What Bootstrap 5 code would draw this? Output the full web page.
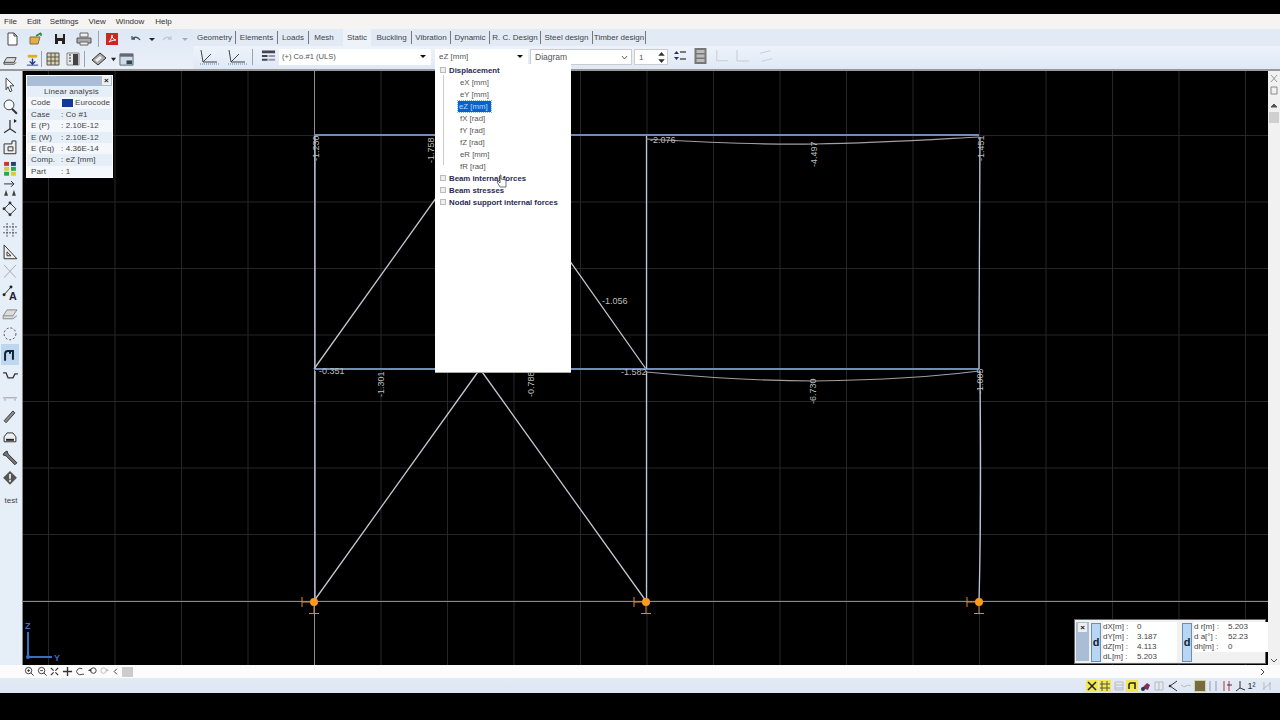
<!DOCTYPE html>
<html lang="en"><head><meta charset="utf-8"><title>Linear analysis</title>
<link href="https://cdn.jsdelivr.net/npm/bootstrap@5.3.0/dist/css/bootstrap.min.css" rel="stylesheet">
<style>
body{background:#000;font-family:"Liberation Sans",Arial,sans-serif;font-size:8px;color:#444;overflow:hidden;width:1280px;height:720px}
.topgap{height:14px}
.menubar{height:15px;background:#f6f4f2;padding-left:4px;font-size:8px;line-height:15px;color:#333}
.menubar span:nth-child(2){margin-left:10px}
.menubar span:nth-child(3){margin-left:9px}
.menubar span:nth-child(4){margin-left:10px}
.menubar span:nth-child(5){margin-left:10px}
.menubar span:nth-child(6){margin-left:11px}
.tb{height:42px;background:#e9eff7}
.tb-left{width:193px;background:linear-gradient(#dde8f5,#eaf0f8);border-bottom:2px solid #999}
.tb-row{height:20px}
.tb-right{flex:1;background:#f1f4f8}
.tabs{height:17px;background:#e2eaf5;font-size:8px;padding-left:1px}
.tabs span{height:13px;line-height:13px;border-right:1px solid #777;text-align:center;flex:none;color:#444}
.tabs span.on{background:#eef3fa;border:0;height:17px;line-height:17px;margin-right:1px}
.tabs span.plain{border:0;margin-right:4px}
.tb2{height:25px;background:linear-gradient(#eef3fa,#dfe9f6);border-bottom:2px solid #999;padding:3px 0 0 5px}
.tb2>svg{margin-top:-1px}
.combo{background:#fff;height:16px;line-height:15px;font-size:8px;padding-left:4px;position:relative;color:#555;flex:none}
.caret-d{position:absolute;right:5px;top:6px;border:3px solid transparent;border-top:3px solid #111;border-bottom:0}
.ic{flex:none;display:block}
.main{height:594px}
.leftbar{width:23px;background:#e6eef8;border-right:1px solid #888;padding-top:4px}
.leftbar svg{display:block;flex:none;margin-left:1px;height:20.700px}
.canvas{width:1245px;position:relative;background:#000}
.canvas>svg{display:block}
.vs{width:12px;background:#f1f1f1;position:relative}
.vs svg{position:absolute;left:1px;display:block}
.vs i{position:absolute;left:1px;top:41px;width:10px;height:11px;background:#cfcfcf;display:block}
.info{position:absolute;left:3px;top:4px;width:87px;height:103px;background:#f4f7fb;border:1px solid #fff;font-size:8px;color:#444;letter-spacing:.1px}
.info .ttl{height:10px;background:#a9bdd6;position:relative}
.info .x{position:absolute;right:1px;top:0;width:9px;height:9px;background:#eee;color:#111;font-size:8px;line-height:9px;text-align:center;font-weight:700}
.info .r{height:11.400px;line-height:11.400px;padding-left:4px;display:flex;white-space:nowrap}
.info .r.alt{background:#e6eef8}
.info .c1{width:30px}
.info .cc{text-align:center;display:block;width:100%}
.flag{width:11px;height:8px;background:#123a9c;margin:2px 2px 0 0;flex:none}
.tree{position:absolute;left:412px;top:-7px;width:136px;height:309px;background:#fff;font-size:7.800px;color:#555;border-bottom:1px solid #aaa}
.tree .h{position:absolute;left:14px;font-weight:700;color:#2a2a55;white-space:nowrap}
.tree .l{position:absolute;left:24px;white-space:nowrap;padding:0 1px}
.tree .sel{background:#0a62c8;color:#bcd9ff;left:23px;width:33px;height:11px;line-height:11px;outline:1px dotted #7fb4ee}
.tree .pm{position:absolute;left:5px;width:6px;height:6px;border:1px solid #bbb;background:#eee}
.tree .tl{position:absolute;background:#ccc}
.coord{position:absolute;left:1051px;top:548px;width:192px;height:45px;background:#f1f1f1;border:1px solid #666;font-size:8px;color:#444;display:flex;padding:2px 1px}
.coord .cl{width:13px;flex:none;background:#a9bdd6;position:relative}
.coord .x{position:absolute;left:2px;top:1px;width:9px;height:9px;background:#eee;color:#111;text-align:center;line-height:9px;font-weight:700}
.dbtn{width:10px;background:#b7d6f3;border:1px solid #6c8fb2;margin:1px 2px 0 2px;font-size:11px;font-weight:700;color:#123;display:flex;align-items:center;justify-content:center;flex:none;height:39px}
.cc-col{width:74px;flex:none;margin-right:3px}
.cc-col div{height:10px;line-height:10px;background:#fff;white-space:nowrap}
.cc-col b{font-weight:400;display:inline-block;width:34px}
.strip{height:13px;background:#fcfcfc;padding-left:24px;gap:1.500px;position:relative}
.status{height:15px;background:linear-gradient(#e4ebf5,#dce6f3);gap:1.500px;padding-right:7px}
.bot{height:27px}
svg text{font-family:"Liberation Sans",Arial,sans-serif}
.sep{display:block;width:1px;height:16px;background:#9aa5b2;flex:none}
</style></head>
<body>
<div class="topgap"></div>
<div class="menubar d-flex"><span>File</span><span>Edit</span><span>Settings</span><span>View</span><span>Window</span><span>Help</span></div>
<div class="tb d-flex">
 <div class="tb-left">
  <div class="tb-row d-flex align-items-center">
   <svg class="ic" style="margin-left:4px" width="16" height="16" viewBox="0 0 16 16"><path d="M4 2h6l3 3v9H4z" fill="#fff" stroke="#444"/><path d="M10 2v3h3" fill="none" stroke="#444"/></svg>
   <svg class="ic" style="margin-left:8px" width="16" height="16" viewBox="0 0 16 16"><path d="M2 6h10l-2 7H2z" fill="#e0b040" stroke="#865"/><path d="M8 5l5-3M13 2v3" stroke="#383" stroke-width="1.500" fill="none"/></svg>
   <svg class="ic" style="margin-left:8px" width="16" height="16" viewBox="0 0 16 16"><path d="M3 3h10v10H3z" fill="#222"/><path d="M5 3h6v4H5z" fill="#ddd"/><path d="M6 10h4v3H6z" fill="#eee"/></svg>
   <svg class="ic" style="margin-left:8px" width="16" height="16" viewBox="0 0 16 16"><path d="M1 7h14v5H1z" fill="#aaa" stroke="#555"/><path d="M4 2h8v4H4zM4 11h8v3H4z" fill="#eee" stroke="#666"/></svg>
   <i class="sep" style="margin-left:6px"></i>
   <svg class="ic" style="margin-left:5px" width="16" height="16" viewBox="0 0 16 16"><path d="M2 2h12v12H2z" fill="#c62a22"/><path d="M5 11c2-2 3-5 3-7 0 3 1 4 4 5-3 0-5 1-7 2z" fill="none" stroke="#fff"/></svg>
   <svg class="ic" style="margin-left:10px" width="12" height="12" viewBox="0 0 12 12"><path d="M2 3v3h3M2.500 6C4 3.500 8 3.500 10 7" fill="none" stroke="#456" stroke-width="1.300"/></svg>
   <svg class="ic" style="margin-left:7px" width="6" height="6" viewBox="0 0 6 6"><path d="M0 2h6L3 5z" fill="#222"/></svg>
   <svg class="ic" style="margin-left:6px" width="12" height="12" viewBox="0 0 12 12"><path d="M10 3v3H7M9.500 6C8 3.500 4 3.500 2 7" fill="none" stroke="#bcc" stroke-width="1.300"/></svg>
   <svg class="ic" style="margin-left:9px" width="6" height="6" viewBox="0 0 6 6"><path d="M0 2h6L3 5z" fill="#aab"/></svg>
  </div>
  <div class="tb-row d-flex align-items-center">
   <svg class="ic" style="margin-left:3px" width="15" height="15" viewBox="0 0 16 16"><path d="M1 11l3-5h10l-2 5zM1 11v2h11l2-2" fill="#ddd" stroke="#444"/></svg>
   <svg class="ic" style="margin-left:7px" width="15" height="15" viewBox="0 0 16 16"><path d="M8 7v6M5 10l3 3 3-3" stroke="#223a90" fill="none" stroke-width="1.500"/><path d="M2 14h12" stroke="#223a90"/><path d="M3 3h10v3H3z" fill="#d8b020"/></svg>
   <i class="sep" style="margin-left:1px"></i>
   <svg class="ic" style="margin-left:3px" width="16" height="16" viewBox="0 0 16 16"><path d="M2 2h12v12H2z" fill="#dbd3a5" stroke="#555"/><path d="M2 6h12M2 10h12M6 2v12M10 2v12" stroke="#555"/></svg>
   <svg class="ic" style="margin-left:4px" width="16" height="16" viewBox="0 0 16 16"><path d="M2 2h12v12H2z" fill="#e8e8e8" stroke="#888"/><path d="M8 3v11h5V3z" fill="#444"/><path d="M4 4h2M4 7h2M4 10h2" stroke="#333"/></svg>
   <i class="sep" style="margin-left:3px"></i>
   <svg class="ic" style="margin-left:6px" width="16" height="16" viewBox="0 0 16 16"><path d="M1 9l8-7 6 5-8 7z" fill="#aaa" stroke="#333"/><path d="M4 9l5-4 2 2-5 4z" fill="#eee"/></svg>
   <svg class="ic" style="margin-left:4px" width="5" height="5" viewBox="0 0 6 6"><path d="M0 1h6L3 5z" fill="#222"/></svg>
   <svg class="ic" style="margin-left:3px" width="15" height="15" viewBox="0 0 16 16"><path d="M1 2h14v12H1z" fill="#cfdbe6" stroke="#567"/><path d="M1 2h14v3H1z" fill="#667"/><path d="M8 9h6v4H8z" fill="#345"/></svg>
  </div>
 </div>
 <div class="tb-right">
  <div class="tabs d-flex align-items-center">
   <span style="width:42px">Geometry</span><span style="width:42px">Elements</span><span style="width:31px">Loads</span><span class="plain" style="width:30px">Mesh</span><span class="on" style="width:28px">Static</span><span style="width:40px">Buckling</span><span style="width:39px">Vibration</span><span style="width:39px">Dynamic</span><span style="width:51px">R. C. Design</span><span style="width:52px">Steel design</span><span style="width:53px">Timber design</span></div>
  <div class="tb2 d-flex align-items-start">
   <svg class="ic" width="24" height="17" viewBox="0 0 24 17"><path d="M3 2l2 12M5 14L13 6M5 14h14" fill="none" stroke="#444"/><path d="M2 16h20" stroke="#58a" stroke-dasharray="1 1"/></svg>
   <svg class="ic" style="margin-left:4px" width="24" height="17" viewBox="0 0 24 17"><path d="M3 2l2 12M5 14L13 6M5 14h14" fill="none" stroke="#444"/><path d="M2 16h20" stroke="#58a" stroke-dasharray="1 1"/></svg>
   <i class="sep" style="margin-left:2px"></i>
   <svg class="ic" style="margin-left:8px" width="15" height="16" viewBox="0 0 16 16"><path d="M1 2h14v3H1zM1 7h6v2H1zM1 11h6v2H1z" fill="#445"/><path d="M8 7h7v2H8zM8 11h7v2H8z" fill="#99a"/></svg>
   <div class="combo" style="width:152px;margin-left:3px;font-size:7.600px;padding-left:3px">(+) Co.#1 (ULS)<i class="caret-d"></i></div>
   <div class="combo" style="width:93px;margin-left:4px">eZ [mm]<i class="caret-d"></i></div>
   <div class="combo" style="width:102px;margin-left:2px;font-size:8.500px;border:1px solid #ccc">Diagram<svg style="position:absolute;right:3px;top:5px" width="7" height="5" viewBox="0 0 7 5"><path d="M1 1l2.500 3L6 1" fill="none" stroke="#666"/></svg></div>
   <div class="combo" style="width:34px;margin-left:2px;border:1px solid #ccc">1<svg style="position:absolute;right:2px;top:1px" width="7" height="13" viewBox="0 0 7 14"><path d="M0 5l3.500-4L7 5zM0 9l3.500 4L7 9z" fill="#333"/></svg></div>
   <svg class="ic" style="margin-left:5px" width="15" height="15" viewBox="0 0 15 15"><path d="M1 6l2.500-3L6 6z" fill="#335"/><path d="M1 9l2.500 3L6 9z" fill="#335"/><path d="M7 4h6M7 11h6" stroke="#555" stroke-width="1.500"/></svg>
   <svg class="ic" style="margin-left:6px" width="13" height="16" viewBox="0 0 12 16"><path d="M0 0h12v16H0z" fill="#777"/><path d="M2 2h8v3H2zM2 6.500h8v3H2zM2 11h8v3H2z" fill="#bbb"/></svg>
   <svg class="ic" style="margin-left:7px" width="15" height="16" viewBox="0 0 16 16"><path d="M3 2v11h12" fill="none" stroke="#c6cbd2"/></svg>
   <svg class="ic" style="margin-left:5px" width="16" height="16" viewBox="0 0 16 16"><path d="M3 2v11h12" fill="none" stroke="#c6cbd2"/></svg>
   <svg class="ic" style="margin-left:8px" width="16" height="16" viewBox="0 0 18 16"><path d="M2 5l12-3M4 14l12-3" fill="none" stroke="#c6cbd2"/></svg>
  </div>
 </div>
</div>
<div class="main d-flex">
 <div class="leftbar d-flex flex-column align-items-start">
  <svg width="18" height="21" viewBox="0 0 18 21"><path d="M5 3l8 8-4 0 2 5-2 1-2-5-2 3z" fill="#fff" stroke="#444"/></svg>
  <svg width="18" height="21" viewBox="0 0 18 21"><circle cx="8" cy="9" r="5" fill="#f4f7fb" stroke="#444"/><path d="M11 13l5 5" stroke="#333" stroke-width="2"/></svg>
  <svg width="18" height="21" viewBox="0 0 18 21"><path d="M9 4v9M9 13l-6 4M9 13l6 4" stroke="#333" fill="none" stroke-width="1.300"/><path d="M13 3l3 2-3 2z" fill="#222"/></svg>
  <svg width="18" height="21" viewBox="0 0 18 21"><path d="M3 7h8V4h4v13H3z" fill="#eee" stroke="#333"/><path d="M7 10h5v4H7z" fill="none" stroke="#333"/></svg>
  <svg width="18" height="21" viewBox="0 0 18 21"><path d="M3 4h5v4H3z" fill="#c33"/><path d="M10 4h5v4h-5z" fill="#246"/><path d="M3 9h5v4H3z" fill="#dc3"/><path d="M10 9h5v4h-5z" fill="#2a5"/><path d="M3 14h5v4H3z" fill="#2a5"/><path d="M10 14h5v4h-5z" fill="#dc3"/></svg>
  <svg width="18" height="21" viewBox="0 0 18 21"><path d="M3 6h10M10 3l3 3-3 3" stroke="#333" fill="none"/><path d="M3 18l2-6 2 6zM11 18l2-6 2 6z" fill="#444"/></svg>
  <svg width="18" height="21" viewBox="0 0 18 21"><path d="M3 10l6-6 6 6-6 6z" fill="none" stroke="#333"/><circle cx="3" cy="10" r="1.500" fill="#333"/><circle cx="9" cy="4" r="1.500" fill="#333"/><circle cx="9" cy="16" r="1.500" fill="#333"/></svg>
  <svg width="18" height="21" viewBox="0 0 18 21"><path d="M2 7h14M2 13h14M6 3v15M12 3v15" stroke="#556" stroke-dasharray="2 1"/></svg>
  <svg width="18" height="21" viewBox="0 0 18 21"><path d="M3 4v14h13z" fill="#eee" stroke="#333"/><path d="M6 11v4h4z" fill="#fff" stroke="#333"/></svg>
  <svg width="18" height="21" viewBox="0 0 18 21"><path d="M3 4l12 13M15 4L3 17" stroke="#aaa" fill="none"/></svg>
  <svg width="18" height="21" viewBox="0 0 18 21"><path d="M3 13L10 5" stroke="#333"/><circle cx="3" cy="13" r="1.500" fill="#222"/><circle cx="10" cy="5" r="1.500" fill="#222"/><text x="8" y="18" font-size="11" font-weight="700" fill="#223">A</text></svg>
  <svg width="18" height="21" viewBox="0 0 18 21"><path d="M2 13l4-6h10l-4 6zM2 13v3h10l4-3" fill="#ddd" stroke="#888"/></svg>
  <svg width="18" height="21" viewBox="0 0 18 21"><circle cx="9" cy="11" r="6" fill="none" stroke="#444" stroke-dasharray="2 2"/></svg>
  <svg width="18" height="21" viewBox="0 0 18 21" style="background:#bdd7f0"><path d="M4 17v-7q0-3 3-3h5v9M9 7v3" fill="none" stroke="#123" stroke-width="2"/></svg>
  <svg width="18" height="21" viewBox="0 0 18 21"><path d="M2 8h3l2 5h5l2-4h3" fill="none" stroke="#333" stroke-width="1.300"/></svg>
  <svg width="18" height="21" viewBox="0 0 18 21"><path d="M2 13h14" stroke="#999"/><path d="M4 14v2M14 14v2" stroke="#999"/></svg>
  <svg width="18" height="21" viewBox="0 0 18 21"><path d="M5 17l9-10-2-2-9 10z" fill="#888" stroke="#444"/></svg>
  <svg width="18" height="21" viewBox="0 0 18 21"><path d="M3 10l3-4h6l3 4v5H3z" fill="#eee" stroke="#333"/><path d="M5 12h8v2H5z" fill="#222"/></svg>
  <svg width="18" height="21" viewBox="0 0 18 21"><path d="M3 6l3-2 1 3 9 9-2 2-9-9-3-1z" fill="#777" stroke="#333"/></svg>
  <svg width="18" height="21" viewBox="0 0 18 21"><path d="M9 3l7 7-7 7-7-7z" fill="#555"/><path d="M8 6h2v5H8zM8 12h2v2H8z" fill="#ddd"/></svg>
  <div class="w-100 text-center" style="font-size:8px;color:#444;margin-top:6px">test</div>
 </div>
 <div class="canvas">
  <svg width="1245" height="594" viewBox="23 71 1245 594">
   <defs><pattern id="g" x="48" y="2" width="66.500" height="66.500" patternUnits="userSpaceOnUse"><path d="M.5 0V66.500M0 .5H66.500" stroke="#262626" fill="none"/></pattern></defs>
   <rect x="23" y="71" width="1245" height="594" fill="url(#g)"/>
   <path d="M23 601.500H1268" stroke="#8a8a8a"/>
   <path d="M314.500 71V665" stroke="#8f8f8f" fill="none"/>
   <path d="M314 369L481 135M646 369L481 135M314 601L480 369M646 601L480 369" stroke="#c3c6cc" stroke-width="1.300" fill="none"/>
   <path d="M314 135H979M314 369H979" stroke="#6f8db8" stroke-width="2" fill="none"/>
   <path d="M315 136V369M646.500 136V369M980 137C979 240 979 300 979 369M315 371V601M646.500 371V601M980 371C981 470 981 530 979 601" stroke="#b9c6dc" stroke-width="1.300" fill="none"/>
   <path d="M646 139C700 142 770 145 815 144C880 143 940 139 979 137M646 372C710 378 770 381 815 381C880 380 940 376 979 371" stroke="#a0a0a0" stroke-width="1.200" fill="none"/>
   <g fill="#bdbdbd" font-size="9">
    <text transform="translate(319 161) rotate(-90)">-1.230</text>
    <text transform="translate(434 163) rotate(-90)">-1.758</text>
    <text x="650" y="143">-2.076</text>
    <text transform="translate(817 167) rotate(-90)">-4.497</text>
    <text transform="translate(984 161) rotate(-90)">-1.451</text>
    <text x="602" y="304">-1.056</text>
    <text x="319" y="374">-0.351</text>
    <text transform="translate(384 397) rotate(-90)">-1.301</text>
    <text transform="translate(534 397) rotate(-90)">-0.788</text>
    <text x="621" y="375">-1.582</text>
    <text transform="translate(816 404) rotate(-90)">-6.730</text>
    <text transform="translate(983 394) rotate(-90)">-1.005</text>
   </g>
   <g stroke="#d98a3a" fill="none">
    <path d="M302 597v10M302 602h8M314 606v8M309 613.500h10"/><circle cx="314" cy="602" r="4" fill="#ff9a1a" stroke="none"/>
    <path d="M634 597v10M634 602h8M646 606v8M641 613.500h10"/><circle cx="646" cy="602" r="4" fill="#ff9a1a" stroke="none"/>
    <path d="M967 597v10M967 602h8M979 606v8M974 613.500h10"/><circle cx="979" cy="602" r="4" fill="#ff9a1a" stroke="none"/>
   </g>
   <path d="M28 632V657H52" stroke="#3a6fc0" stroke-width="2" fill="none"/><circle cx="28" cy="657" r="2" fill="#3a6fc0"/>
   <text x="25" y="629" fill="#3a6fc0" font-size="9" font-weight="700">Z</text>
   <text x="54" y="661" fill="#3a6fc0" font-size="9" font-weight="700">Y</text>
  </svg>
  <div class="info">
   <div class="ttl"><span class="x">×</span></div>
   <div class="r alt"><span class="cc">Linear analysis</span></div>
   <div class="r"><span class="c1" style="width:31px">Code</span><i class="flag"></i>Eurocode</div>
   <div class="r alt"><span class="c1">Case</span>: Co #1</div>
   <div class="r"><span class="c1">E (P)</span>: 2.10E-12</div>
   <div class="r alt"><span class="c1">E (W)</span>: 2.10E-12</div>
   <div class="r"><span class="c1">E (Eq)</span>: 4.36E-14</div>
   <div class="r alt"><span class="c1">Comp.</span>: eZ [mm]</div>
   <div class="r"><span class="c1">Part</span>: 1</div>
  </div>
  <div class="tree">
   <i class="tl" style="left:8px;top:11px;width:1px;height:90px"></i>
   <i class="pm" style="top:3px"></i>
   <span class="h" style="top:1px">Displacement</span>
   <span class="l" style="top:13px">eX [mm]</span>
   <span class="l" style="top:25px">eY [mm]</span>
   <span class="l sel" style="top:37px">eZ [mm]</span>
   <span class="l" style="top:49px">fX [rad]</span>
   <span class="l" style="top:61px">fY [rad]</span>
   <span class="l" style="top:73px">fZ [rad]</span>
   <span class="l" style="top:85px">eR [mm]</span>
   <span class="l" style="top:97px">fR [rad]</span>
   <i class="pm" style="top:111px"></i><span class="h" style="top:109px">Beam internal forces</span>
   <i class="pm" style="top:123px"></i><span class="h" style="top:121px">Beam stresses</span>
   <i class="pm" style="top:135px"></i><span class="h" style="top:133px">Nodal support internal forces</span>
   <svg style="position:absolute;left:61px;top:110px" width="12" height="14" viewBox="0 0 12 14"><path d="M4 1v8L2 7 1 8l3 5h6V6L5 5V1z" fill="#fff" stroke="#333" stroke-width=".7"/></svg>
  </div>
  <div class="coord">
   <div class="cl"><span class="x">×</span></div>
   <div class="dbtn">d</div>
   <div class="cc-col">
    <div><b>dX[m] :</b>0</div><div><b>dY[m] :</b>3.187</div><div><b>dZ[m] :</b>4.113</div><div><b>dL[m] :</b>5.203</div>
   </div>
   <div class="dbtn">d</div>
   <div class="cc-col">
    <div><b>d r[m] :</b>5.203</div><div><b>d a[°] :</b>52.23</div><div><b>dh[m] :</b>0</div>
   </div>
  </div>
 </div>
 <div class="vs">
  <svg style="top:3px" width="10" height="9" viewBox="0 0 10 9"><path d="M2 1l6 7M8 1L2 8" stroke="#999"/></svg>
  <svg style="top:15px" width="10" height="9" viewBox="0 0 10 9"><path d="M2 1h6v7H2z" fill="none" stroke="#888"/></svg>
  <svg style="top:31px" width="10" height="7" viewBox="0 0 10 7"><path d="M2 5l3-3 3 3z" fill="#555" stroke="#555"/></svg>
  <i></i>
  <svg style="top:586px" width="10" height="7" viewBox="0 0 10 7"><path d="M2 2l3 3 3-3" fill="none" stroke="#555"/></svg>
 </div>
</div>
<div class="strip d-flex align-items-center">
 <svg class="ic" width="11" height="11" viewBox="0 0 12 12"><circle cx="5" cy="5" r="3.500" fill="none" stroke="#333"/><path d="M7.500 7.500l3 3M3.500 5h3M5 3.500v3" stroke="#333"/></svg>
 <svg class="ic" width="11" height="11" viewBox="0 0 12 12"><circle cx="5" cy="5" r="3.500" fill="none" stroke="#333"/><path d="M7.500 7.500l3 3M3.500 5h3" stroke="#333"/></svg>
 <svg class="ic" width="11" height="11" viewBox="0 0 12 12"><path d="M2 2l3 3M10 2L7 5M2 10l3-3M10 10L7 7" stroke="#333" stroke-width="1.300"/></svg>
 <svg class="ic" width="11" height="11" viewBox="0 0 12 12"><path d="M6 1v10M1 6h10" stroke="#333" stroke-width="1.500"/></svg>
 <svg class="ic" width="11" height="11" viewBox="0 0 12 12"><path d="M9 3a4 3.500 0 1 0 0 6h2" fill="none" stroke="#333"/></svg>
 <svg class="ic" width="11" height="11" viewBox="0 0 12 12"><circle cx="7" cy="5" r="3" fill="none" stroke="#333"/><path d="M5 6L1 5l3-2z" fill="#333"/></svg>
 <svg class="ic" width="11" height="11" viewBox="0 0 12 12"><circle cx="5" cy="5" r="3" fill="none" stroke="#bbb"/><path d="M7 6l4-1-3-2z" fill="#bbb"/></svg>
 <svg class="ic" width="8" height="11" viewBox="0 0 8 12"><path d="M5 3L2 6l3 3" fill="none" stroke="#333"/></svg>
 <i style="width:11px;height:10px;background:#ccc;display:block;margin-left:1px"></i>
 <svg class="ic ms-auto" style="margin-right:14px" width="6" height="8" viewBox="0 0 6 8"><path d="M1 1l3 3-3 3" fill="none" stroke="#444"/></svg>
</div>
<div class="status d-flex justify-content-end align-items-center">
 <svg class="ic" width="12" height="12" viewBox="0 0 12 12"><rect width="12" height="12" fill="#f3e94e"/><path d="M2 2l8 8M10 2L2 10" stroke="#222" stroke-width="1.500"/></svg>
 <svg class="ic" width="12" height="12" viewBox="0 0 12 12"><rect width="12" height="12" fill="#f3e94e"/><path d="M3 1v10M8 1v10M1 4h10M1 8h10" stroke="#555"/></svg>
 <svg class="ic" width="12" height="12" viewBox="0 0 12 12"><path d="M2 2h8v8H2zM2 5h8M2 8h8" fill="none" stroke="#bbb"/></svg>
 <svg class="ic" width="12" height="12" viewBox="0 0 12 12"><rect width="12" height="12" fill="#f3e94e"/><path d="M3 9V5q0-2 2-2h4v6" fill="none" stroke="#222" stroke-width="1.500"/></svg>
 <svg class="ic" width="12" height="12" viewBox="0 0 12 12"><path d="M2 8l5-5 3 2-2 5z" fill="#813060"/><circle cx="3" cy="9" r="2" fill="#334"/></svg>
 <svg class="ic" width="12" height="12" viewBox="0 0 12 12"><path d="M2 2h8v8H2z" fill="none" stroke="#bbb"/><path d="M6 2v8" stroke="#bbb"/></svg>
 <svg class="ic" width="12" height="12" viewBox="0 0 12 12"><path d="M10 1L3 6l7 5" fill="none" stroke="#333"/><circle cx="3" cy="6" r="1.300" fill="#333"/></svg>
 <svg class="ic" width="12" height="12" viewBox="0 0 12 12"><path d="M1 5q3 3 5 1t5 0" fill="none" stroke="#bbb"/></svg>
 <svg class="ic" width="12" height="12" viewBox="0 0 12 12"><rect width="12" height="12" fill="#c9d6a5"/><rect x="1" y="1" width="10" height="10" fill="#7a6a40"/></svg>
 <svg class="ic" width="12" height="12" viewBox="0 0 12 12"><path d="M3 1v10M9 1v10" stroke="#99a"/></svg>
 <svg class="ic" width="12" height="12" viewBox="0 0 12 12"><path d="M3 1v10M8 1v10" stroke="#b33"/><path d="M6 5h5" stroke="#335"/></svg>
 <svg class="ic" width="12" height="12" viewBox="0 0 12 12"><path d="M6 1v7L2 11M6 8l5 2" fill="none" stroke="#333"/></svg>
 <span style="font-size:9px;color:#234;width:12px;line-height:12px;white-space:nowrap">1²</span>
 <svg class="ic" width="12" height="12" viewBox="0 0 12 12"><path d="M3 2v8M9 2v8M2 9l8-6" stroke="#bbb"/></svg>
</div>
<div class="bot"></div>
</body></html>
